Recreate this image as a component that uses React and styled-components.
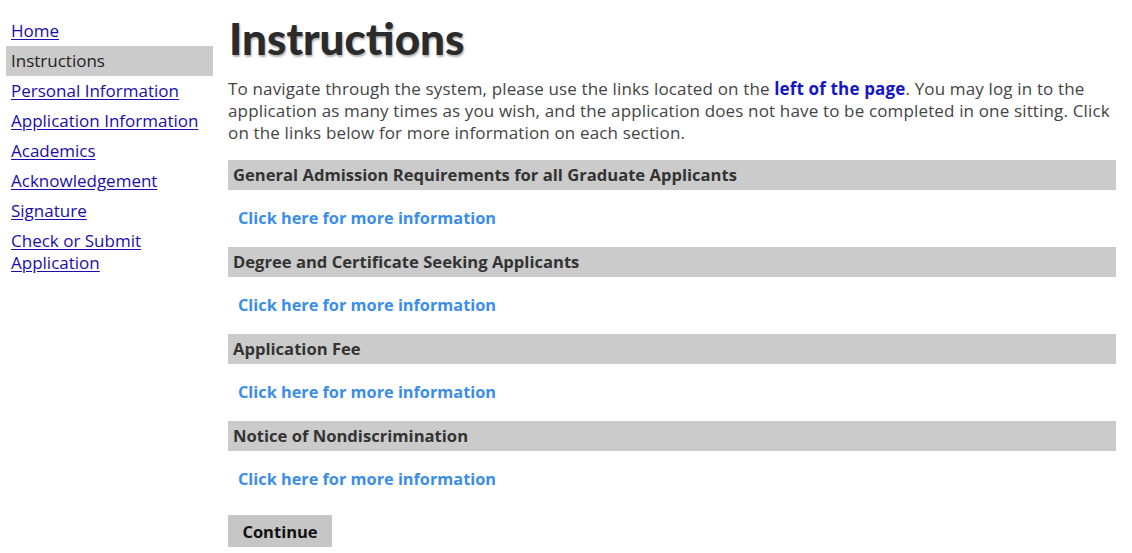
import React from "react";
import styled, { createGlobalStyle } from "styled-components";

const GlobalStyle = createGlobalStyle`
  html, body {
    margin: 0;
    padding: 0;
    background: #fff;
  }
  body {
    font-family: "Open Sans", "Lato", sans-serif;
    color: #333;
  }
`;

const Page = styled.div`
  display: flex;
  align-items: flex-start;
  gap: 15px;
  padding: 16px 16px 0 6px;
`;

const Sidebar = styled.nav`
  width: 207px;
  flex-shrink: 0;
  display: flex;
  flex-direction: column;
`;

const NavItem = styled.a`
  display: block;
  padding: 4px 5px;
  min-height: 22px;
  line-height: 22px;
  font-size: 17px;
  color: ${(p) => (p.$active ? "#222" : "#1a0dab")};
  background: ${(p) => (p.$active ? "#cbcbcb" : "transparent")};
  text-decoration: ${(p) => (p.$active ? "none" : "underline")};
  text-underline-offset: 2px;
  cursor: pointer;
`;

const Main = styled.main`
  flex: 1;
  display: flex;
  flex-direction: column;
`;

const Title = styled.h1`
  margin: 0 0 0 1px;
  font-family: "Lato", sans-serif;
  font-weight: 900;
  font-size: 44px;
  line-height: 44px;
  color: #2b2b2b;
  text-shadow: 1px 2px 2px rgba(0, 0, 0, 0.3);
`;

const Intro = styled.p`
  margin: 18px 0 16px;
  font-size: 17px;
  line-height: 22px;
  letter-spacing: 0.15px;
  color: #444;
  strong {
    color: #1515c8;
    font-weight: 700;
  }
`;

const SectionHead = styled.div`
  background: #cbcbcb;
  height: 30px;
  line-height: 30px;
  padding: 0 5px;
  font-size: 16.6px;
  font-weight: 700;
  color: #333;
`;

const InfoLink = styled.a`
  display: block;
  height: 57px;
  line-height: 57px;
  padding-left: 10px;
  font-size: 16.3px;
  font-weight: 700;
  color: #3a8de8;
  text-decoration: none;
  cursor: pointer;
`;

const ContinueButton = styled.button`
  align-self: flex-start;
  margin-top: 7px;
  width: 104px;
  height: 32px;
  border: none;
  background: #c6c6c6;
  font-family: "Open Sans", sans-serif;
  font-size: 16.5px;
  font-weight: 700;
  color: #111;
  cursor: pointer;
`;

const navLinks = [
  "Home",
  "Instructions",
  "Personal Information",
  "Application Information",
  "Academics",
  "Acknowledgement",
  "Signature",
  "Check or Submit Application",
];

const sections = [
  "General Admission Requirements for all Graduate Applicants",
  "Degree and Certificate Seeking Applicants",
  "Application Fee",
  "Notice of Nondiscrimination",
];

export default function App() {
  return (
    <>
      <GlobalStyle />
      <Page>
        <Sidebar>
          {navLinks.map((label) => (
            <NavItem key={label} $active={label === "Instructions"}>
              {label}
            </NavItem>
          ))}
        </Sidebar>
        <Main>
          <Title>Instructions</Title>
          <Intro>
            To navigate through the system, please use the links located on the{" "}
            <strong>left of the page</strong>. You may log in to the application
            as many times as you wish, and the application does not have to be
            completed in one sitting. Click on the links below for more
            information on each section.
          </Intro>
          {sections.map((s) => (
            <React.Fragment key={s}>
              <SectionHead>{s}</SectionHead>
              <InfoLink>Click here for more information</InfoLink>
            </React.Fragment>
          ))}
          <ContinueButton>Continue</ContinueButton>
        </Main>
      </Page>
    </>
  );
}
